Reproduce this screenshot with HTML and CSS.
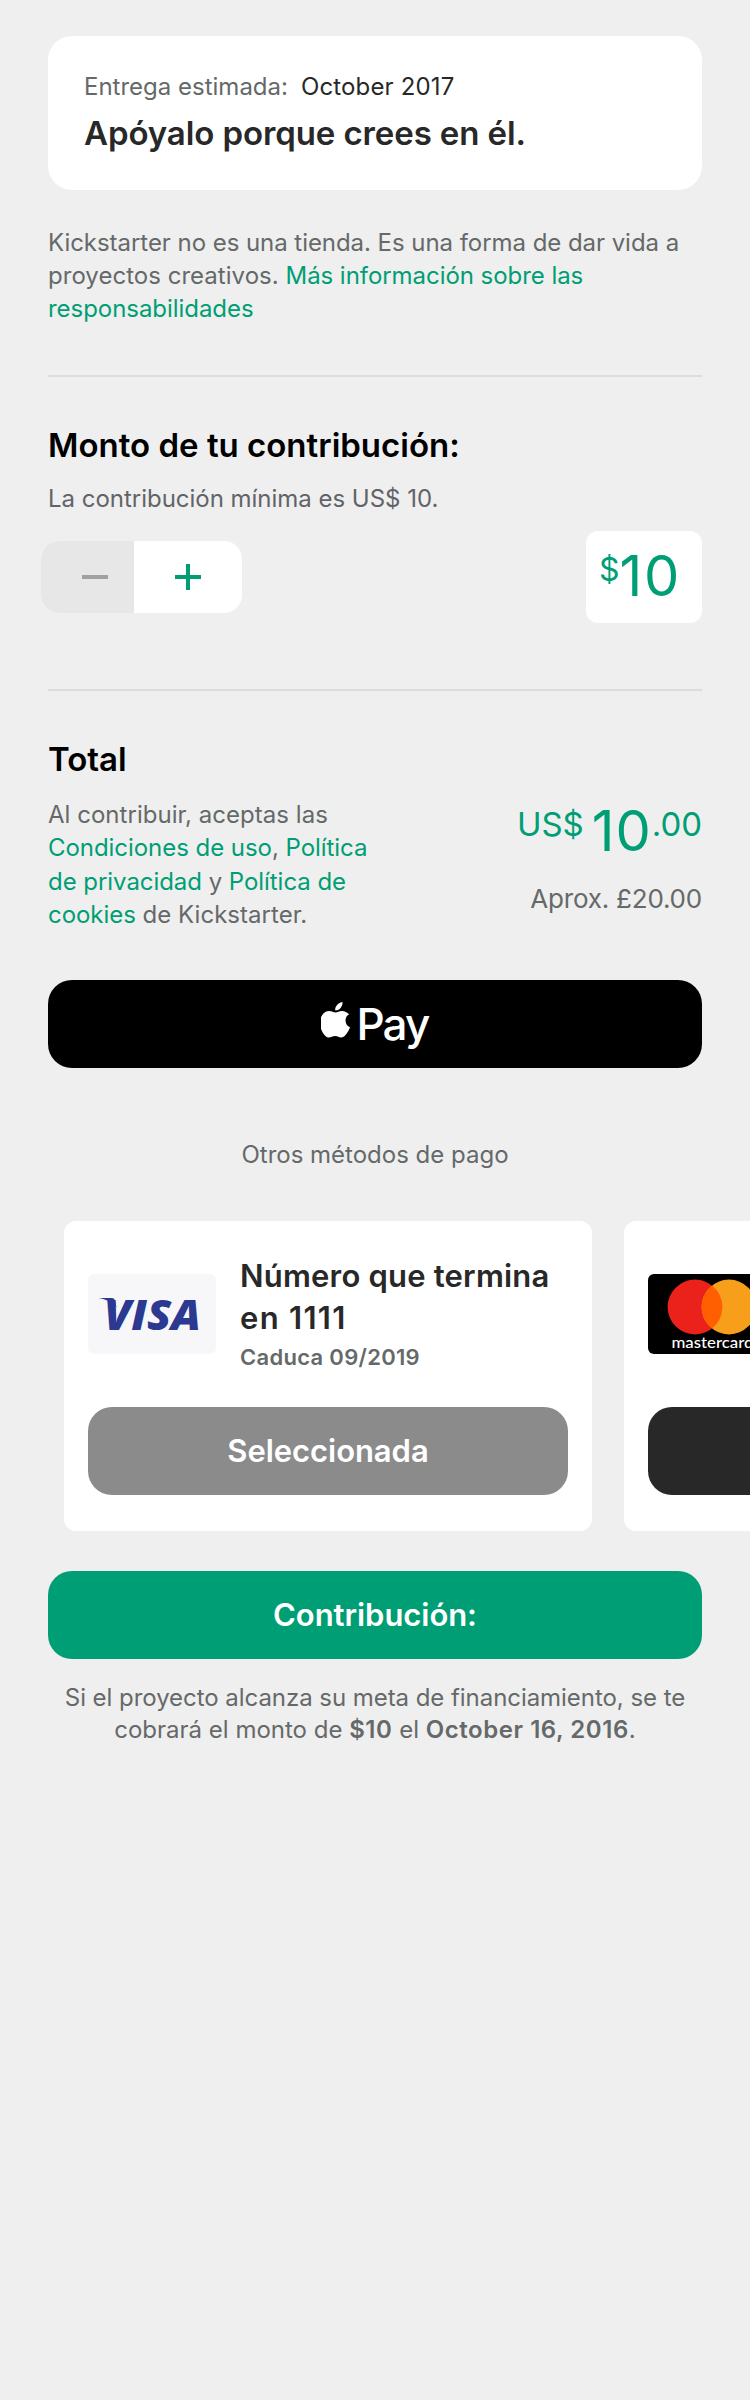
FILE: index.html
```html
<!DOCTYPE html>
<html lang="es">
<head>
<meta charset="utf-8">
<title>Contribución</title>
<link rel="stylesheet" href="styles.css">
</head>
<body>
<main class="page">
  <section class="intro">
    <p class="delivery"><span>Entrega estimada:</span><span class="delivery-date">October 2017</span></p>
    <h1 class="intro-title">Apóyalo porque crees en él.</h1>
  </section>
  <p class="notice">Kickstarter no es una tienda. Es una forma de dar vida a<br><span class="loose">proyectos creativos. </span><a class="link">Más información sobre las<br>responsabilidades</a></p>
  <hr class="rule">
  <section class="pledge">
    <h2 class="heading">Monto de tu contribución:</h2>
    <p class="minimum">La contribución mínima es US$ 10.</p>
    <div class="pledge-row">
      <div class="stepper">
        <span class="step step-minus"><svg width="26" height="4" viewBox="0 0 26 4"><rect width="26" height="4" fill="#a0a1a1"/></svg></span>
        <span class="step step-plus"><svg width="26" height="26" viewBox="0 0 26 26"><path d="M0 13h26M13 0v26" stroke="#009e74" stroke-width="4"/></svg></span>
      </div>
      <div class="amount"><span class="amount-sign">$</span><span class="amount-value">10</span></div>
    </div>
  </section>
  <hr class="rule rule-total">
  <section class="total">
    <h2 class="heading">Total</h2>
    <div class="total-row">
      <p class="legal"><span class="loose">Al contribuir, aceptas las</span><br><a class="link">Condiciones de uso</a>, <a class="link">Política<br>de privacidad</a> y <a class="link">Política de<br>cookies</a> <span class="loose">de Kickstarter.</span></p>
      <div class="sum">
        <p class="sum-main"><span class="sum-small">US$</span><span class="sum-value">10</span><span class="sum-small">.00</span></p>
        <p class="approx">Aprox. £20.00</p>
      </div>
    </div>
  </section>
  <div class="button button-pay">
    <svg class="apple" width="29" height="36" viewBox="0 0 29 36"><path fill="#fff" d="M21.500 0c.3 2.200-.6 4.300-1.900 5.900-1.300 1.600-3.400 2.500-5.400 2.300-.3-2.100.7-4 1.900-5.300C17.500 1.300 19.700.1 21.500 0zM28.100 12.300c-2.200 1.400-3.600 3.300-3.600 6.200 0 3.300 1.900 5.600 4.500 6.700-.6 2-1.600 3.900-2.800 5.600-1.600 2.400-3.300 4.700-5.900 4.700-2.500.1-3.300-1.500-6.200-1.500-2.800 0-3.800 1.500-6.200 1.600-2.500.1-4.400-2.500-6.100-4.900C-1.300 26-2 17.700 1.200 12.900c1.700-2.500 4.400-4 7-4 2.600 0 4.200 1.500 6.400 1.500 2.100 0 3.400-1.500 6.400-1.500 2.600 0 5.300 1.300 7.100 3.400z"/></svg>
    <span class="pay-text">Pay</span>
  </div>
  <p class="others">Otros métodos de pago</p>
  <div class="cards">
    <article class="card">
      <div class="card-info">
        <svg class="brand" width="128" height="80" viewBox="0 0 128 80"><rect width="128" height="80" rx="6" fill="#f7f7fa"/><path d="M10.500 24h13c2 0 3 .8 3.500 2.500l1.500 7C25 28 18 25.500 10.500 24z" fill="#2b3990"/><text class="visa" x="16" y="55.500" textLength="97" lengthAdjust="spacingAndGlyphs">VISA</text></svg>
        <div class="card-text">
          <h3 class="card-title">Número que termina<br><span class="card-number">en 1111</span></h3>
          <p class="card-expiry">Caduca 09/2019</p>
        </div>
      </div>
      <div class="button button-selected">Seleccionada</div>
    </article>
    <article class="card">
      <div class="card-info">
        <svg class="brand" width="128" height="80" viewBox="0 0 128 80"><rect width="128" height="80" rx="6" fill="#000"/><circle cx="47" cy="33" r="27.400" fill="#eb211c"/><circle cx="81" cy="33" r="27.400" fill="#f79f1a"/><path d="M64 11.500a27.400 27.400 0 0 1 0 43a27.400 27.400 0 0 1 0-43z" fill="#ff5f00"/><text class="mastercard" x="23.500" y="74" textLength="82" lengthAdjust="spacingAndGlyphs">mastercard</text></svg>
      </div>
      <div class="button button-select"></div>
    </article>
  </div>
  <div class="button button-submit">Contribución:</div>
  <p class="footer">Si el proyecto alcanza su meta de financiamiento, se te<br><span class="footer-charge">cobrará el monto de <b class="strong">$10</b> el <b class="strong">October 16, 2016</b>.</span></p>
</main>
</body>
</html>
```
FILE: styles.css
```css
* { box-sizing: border-box; }
body { margin: 0; background: #efefef; }
h1, h2, h3, p { margin: 0; font-weight: 400; }
.page {
  width: 750px;
  height: 2400px;
  padding: 36px 48px 0;
  overflow: hidden;
  font-family: Inter, "Noto Sans", sans-serif;
  font-size: 24px;
  line-height: 33px;
  letter-spacing: -0.05px;
  color: #656969;
  white-space: nowrap;
}
.link { color: #009e74; }
.loose { letter-spacing: 0.03px; }
.intro {
  height: 154px;
  padding: 34px 36px 0;
  border-radius: 24px;
  background: #fff;
}
.delivery { display: flex; gap: 13px; letter-spacing: 0; }
.delivery-date { color: #282828; letter-spacing: 0.15px; }
.intro-title {
  margin-top: 10px;
  font-size: 33px;
  line-height: 40px;
  font-weight: 600;
  letter-spacing: -0.1px;
  color: #282828;
}
.notice { margin-top: 36px; }
.rule { height: 2px; margin: 50px 0 0; border: 0; background: #dcdcdc; }
.heading {
  margin-top: 48px;
  font-size: 33px;
  line-height: 40px;
  font-weight: 600;
  letter-spacing: 0;
  color: #000;
}
.minimum { margin-top: 17px; color: #626369; letter-spacing: -0.02px; }
.pledge-row {
  display: flex;
  align-items: center;
  justify-content: space-between;
  margin: 16px 0 0 -7px;
}
.stepper {
  display: flex;
  width: 201px;
  height: 72px;
  overflow: hidden;
  border-radius: 18px;
  background: #fff;
}
.step { display: flex; align-items: center; justify-content: center; }
.step-minus { width: 93px; padding-left: 15px; background: #e7e7e7; }
.step-plus { width: 108px; }
.amount {
  display: flex;
  width: 116px;
  height: 92px;
  padding: 12px 0 0 13px;
  border-radius: 12px;
  background: #fff;
  color: #009e74;
}
.amount-sign { font-size: 32px; line-height: 34px; margin-top: 10px; }
.amount-value { font-size: 56px; line-height: 66px; letter-spacing: 1.8px; }
.rule-total { margin-top: 66px; }
.total-row { display: flex; justify-content: space-between; margin-top: 19px; }
.legal { line-height: 33.3px; }
.sum { text-align: right; }
.sum-main {
  display: flex;
  justify-content: flex-end;
  height: 66px;
  color: #009e74;
}
.sum-small { font-size: 33px; line-height: 52px; }
.sum-value { margin-left: 8px; font-size: 56px; line-height: 66px; letter-spacing: 1px; }
.approx { margin-top: 17px; font-size: 26px; line-height: 36px; letter-spacing: -0.2px; }
.button {
  display: flex;
  align-items: center;
  justify-content: center;
  height: 88px;
  padding-bottom: 1px;
  border-radius: 24px;
  font-size: 31px;
  font-weight: 600;
  letter-spacing: -0.05px;
  color: #fff;
}
.button-pay { margin-top: 49px; background: #000; }
.apple { margin: -7px 6px 0 0; }
.pay-text { font-size: 44px; line-height: 52px; font-weight: 500; letter-spacing: -1.8px; }
.others { margin-top: 70px; text-align: center; letter-spacing: 0; }
.cards { display: flex; gap: 32px; margin: 50px -48px 0 16px; overflow: hidden; }
.card {
  flex: none;
  width: 528px;
  height: 310px;
  padding: 32px 24px 0;
  border-radius: 12px;
  background: #fff;
}
.card-info { display: flex; gap: 24px; height: 154px; }
.card-text { padding-top: 2px; }
.brand { flex: none; margin-top: 21px; }
.visa { font: italic 800 43px "Open Sans", sans-serif; letter-spacing: 0; fill: #2b3990; }
.mastercard { font: 500 15px Lato, sans-serif; letter-spacing: 0; fill: #fff; }
.card-title {
  font-size: 31px;
  line-height: 42px;
  font-weight: 600;
  letter-spacing: 0.2px;
  color: #282828;
}
.card-number { letter-spacing: 1.3px; }
.card-expiry {
  margin-top: 2px;
  font-size: 22px;
  line-height: 32px;
  font-weight: 600;
  letter-spacing: 0.3px;
}
.button-selected { background: #8b8b8b; }
.button-select { background: #282828; }
.button-submit { margin-top: 40px; background: #009e74; }
.footer { margin-top: 23px; line-height: 32px; text-align: center; }
.footer-charge { letter-spacing: 0; }
.strong { font-weight: 600; letter-spacing: 0.55px; }
```
